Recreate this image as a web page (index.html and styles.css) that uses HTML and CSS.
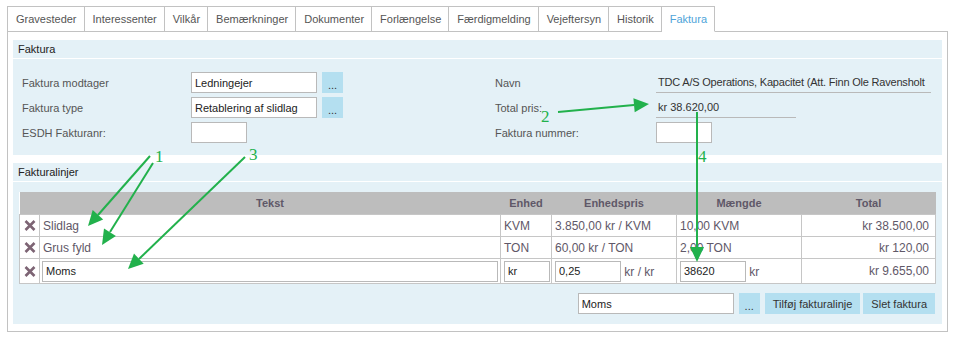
FILE: index.html
```html
<!DOCTYPE html>
<html lang="da">
<head>
    <meta charset="UTF-8">
    <title>Faktura</title>
    <link rel="stylesheet" href="styles.css">
</head>
<body>

<div class="page">

  <!-- Tabs -->
  <ul class="tabs">
    <li class="tab">Gravesteder</li>
    <li class="tab">Interessenter</li>
    <li class="tab">Vilkår</li>
    <li class="tab">Bemærkninger</li>
    <li class="tab">Dokumenter</li>
    <li class="tab">Forlængelse</li>
    <li class="tab">Færdigmelding</li>
    <li class="tab">Vejeftersyn</li>
    <li class="tab">Historik</li>
    <li class="tab active">Faktura</li>
  </ul>

  <div class="panel">

    <!-- Faktura -->
    <section class="box">
      <h3 class="box-title">Faktura</h3>
      <div class="box-body fields">
        <div class="col col-left">
          <div class="field">
            <label class="label">Faktura modtager</label>
            <input class="input wide" type="text" value="Ledningejer">
            <button class="btn dots">...</button>
          </div>
          <div class="field">
            <label class="label">Faktura type</label>
            <input class="input wide" type="text" value="Retablering af slidlag">
            <button class="btn dots">...</button>
          </div>
          <div class="field">
            <label class="label">ESDH Fakturanr:</label>
            <input class="input short" type="text" value="">
          </div>
        </div>
        <div class="col col-right">
          <div class="field">
            <label class="label">Navn</label>
            <span class="value name">TDC A/S Operations, Kapacitet (Att. Finn Ole Ravensholt</span>
          </div>
          <div class="field">
            <label class="label">Total pris:</label>
            <span class="value price">kr 38.620,00</span>
          </div>
          <div class="field">
            <label class="label">Faktura nummer:</label>
            <input class="input short" type="text" value="">
          </div>
        </div>
      </div>
    </section>

    <!-- Fakturalinjer -->
    <section class="box">
      <h3 class="box-title">Fakturalinjer</h3>
      <div class="box-body lines">
        <table class="grid">
          <colgroup>
            <col style="width:20px">
            <col style="width:461px">
            <col style="width:51px">
            <col style="width:125px">
            <col style="width:125px">
            <col style="width:134px">
          </colgroup>
          <thead>
            <tr>
              <th></th>
              <th>Tekst</th>
              <th>Enhed</th>
              <th>Enhedspris</th>
              <th>Mængde</th>
              <th>Total</th>
            </tr>
          </thead>
          <tbody>
            <tr>
              <td class="del"><svg width="12" height="11" viewBox="0 0 12 11"><path d="M1.5 1 L10.5 10 M10.5 1 L1.5 10" stroke="#7d6474" stroke-width="2.6"/></svg></td>
              <td>Slidlag</td>
              <td>KVM</td>
              <td>3.850,00 kr / KVM</td>
              <td>10,00 KVM</td>
              <td class="num">kr 38.500,00</td>
            </tr>
            <tr>
              <td class="del"><svg width="12" height="11" viewBox="0 0 12 11"><path d="M1.5 1 L10.5 10 M10.5 1 L1.5 10" stroke="#7d6474" stroke-width="2.6"/></svg></td>
              <td>Grus fyld</td>
              <td>TON</td>
              <td>60,00 kr / TON</td>
              <td>2,00 TON</td>
              <td class="num">kr 120,00</td>
            </tr>
            <tr class="edit-row">
              <td class="del"><svg width="12" height="11" viewBox="0 0 12 11"><path d="M1.5 1 L10.5 10 M10.5 1 L1.5 10" stroke="#7d6474" stroke-width="2.6"/></svg></td>
              <td><input class="input cell-text" type="text" value="Moms"></td>
              <td><input class="input cell-unit" type="text" value="kr"></td>
              <td><input class="input cell-num" type="text" value="0,25"> kr / kr</td>
              <td><input class="input cell-num" type="text" value="38620"> kr</td>
              <td class="num">kr 9.655,00</td>
            </tr>
          </tbody>
        </table>

        <div class="actions">
          <input class="input add-text" type="text" value="Moms">
          <button class="btn dots">...</button>
          <button class="btn">Tilføj fakturalinje</button>
          <button class="btn">Slet faktura</button>
        </div>
      </div>
    </section>
  </div>

  <!-- Green annotation arrows -->
  <svg class="notes" width="958" height="343" viewBox="0 0 958 343">
    <g stroke="#22b14c" stroke-width="2" fill="none">
      <line x1="150" y1="156" x2="98" y2="215"/>
      <line x1="153" y1="163" x2="110" y2="232"/>
      <line x1="245" y1="157" x2="139" y2="259"/>
      <line x1="558" y1="112" x2="634" y2="105"/>
      <line x1="697" y1="112" x2="697" y2="247"/>
    </g>
    <g fill="#22b14c">
      <polygon points="88,226 103.2,219.4 92.7,210.1"/>
      <polygon points="102,245 115.9,236 104,228.6"/>
      <polygon points="128,269 143.7,263.7 134,253.6"/>
      <polygon points="649,104 634.7,112.3 633.4,98.3"/>
      <polygon points="697,262 690,247 704,247"/>
    </g>
    <g class="note-num" fill="#22b14c">
      <text x="155" y="162">1</text>
      <text x="541" y="122">2</text>
      <text x="249" y="160">3</text>
      <text x="698" y="162">4</text>
    </g>
  </svg>
</div>

</body>
</html>
```

FILE: styles.css
```css
html, body {
  margin: 0;
  background: #ffffff;
  font-family: 'Liberation Sans', Arial, sans-serif;
  font-size: 11px;
  color: #555555;
}

.page {
  position: relative;
  width: 958px;
  height: 343px;
  padding: 6px 10px 0 7px;
  box-sizing: border-box;
}

/* Tabs */
.tabs {
  display: flex;
  list-style: none;
  margin: 0 0 -1px 0;
  padding: 0;
}

.tab {
  position: relative;
  height: 24px;
  line-height: 24px;
  padding: 0 7px 0 8px;
  border: 1px solid #c2c2c2;
  border-left: none;
  background: #ffffff;
  color: #555555;
  white-space: nowrap;
}

.tab:first-child {
  border-left: 1px solid #c2c2c2;
}

.tab.active {
  color: #4ea4d9;
  border-bottom-color: #ffffff;
  z-index: 2;
}

/* Panel */
.panel {
  border: 1px solid #c2c2c2;
  padding: 8px 5px 7px 5px;
  display: flex;
  flex-direction: column;
  gap: 8px;
}

.box {
  background: #e4f1f7;
}

.box-title {
  margin: 0;
  height: 18px;
  line-height: 18px;
  padding-left: 5px;
  font-size: 11px;
  font-weight: normal;
  color: #222222;
  border-bottom: 1px solid #ffffff;
}

/* Faktura fields */
.fields {
  display: flex;
  padding: 13px 9px 12px 9px;
}

.col {
  display: flex;
  flex-direction: column;
  gap: 4px;
}

.col-left {
  width: 473px;
}

.col-right {
  flex: 1;
}

.field {
  display: flex;
  align-items: center;
  height: 21px;
}

.col-left .label {
  width: 169px;
}

.col-right .label {
  width: 161px;
}

.input {
  box-sizing: border-box;
  height: 21px;
  border: 1px solid #b9b9b9;
  background: #ffffff;
  font-family: 'Liberation Sans', Arial, sans-serif;
  font-size: 11px;
  color: #222222;
  padding: 0 3px;
  margin: 0;
  outline: none;
}

.input.wide {
  width: 126px;
}

.input.short {
  width: 56px;
}

.btn {
  height: 21px;
  border: none;
  background: #b4dff0;
  color: #333333;
  font-family: 'Liberation Sans', Arial, sans-serif;
  font-size: 11px;
  padding: 0 8px;
  margin: 0;
  cursor: pointer;
}

.btn.dots {
  width: 21px;
  padding: 0;
  padding-top: 5px;
  margin-left: 5px;
}

.value {
  box-sizing: border-box;
  height: 21px;
  line-height: 20px;
  padding-left: 2px;
  border-bottom: 1px solid #b9b9b9;
  color: #333333;
  white-space: nowrap;
}

.value.name {
  width: 275px;
  letter-spacing: -0.2px;
}

.value.price {
  width: 140px;
}

/* Fakturalinjer */
.lines {
  padding: 10px 7px 10px 6px;
}

.grid {
  width: 916px;
  table-layout: fixed;
  border-collapse: collapse;
  background: #ffffff;
  font-size: 12px;
  color: #5f5868;
}

.grid th {
  height: 22px;
  padding: 0;
  background: #bdbdbd;
  color: #5f5868;
  font-size: 11px;
  font-weight: bold;
  text-align: center;
}

.grid td {
  height: 21px;
  padding: 0 3px;
  border: 1px solid #c6c6c6;
  white-space: nowrap;
  overflow: hidden;
}

.grid td.del {
  padding: 0;
  text-align: center;
  line-height: 0;
}

.grid td.num {
  text-align: right;
  padding-right: 6px;
}

.grid .edit-row td {
  height: 24px;
}

.grid .edit-row td:nth-child(2) {
  padding-left: 2px;
}

.input.cell-text {
  width: 456px;
}

.input.cell-unit {
  width: 46px;
}

.input.cell-num {
  width: 66px;
}

.actions {
  display: flex;
  justify-content: flex-end;
  align-items: center;
  gap: 3px;
  margin-top: 9px;
}

.input.add-text {
  width: 156px;
}

.actions .btn.dots {
  margin: 0 2px 0 2px;
}

/* Annotations */
.notes {
  position: absolute;
  top: 0;
  left: 0;
  pointer-events: none;
}

.note-num {
  font-family: 'Liberation Serif', 'Times New Roman', serif;
  font-size: 17px;
}
```
